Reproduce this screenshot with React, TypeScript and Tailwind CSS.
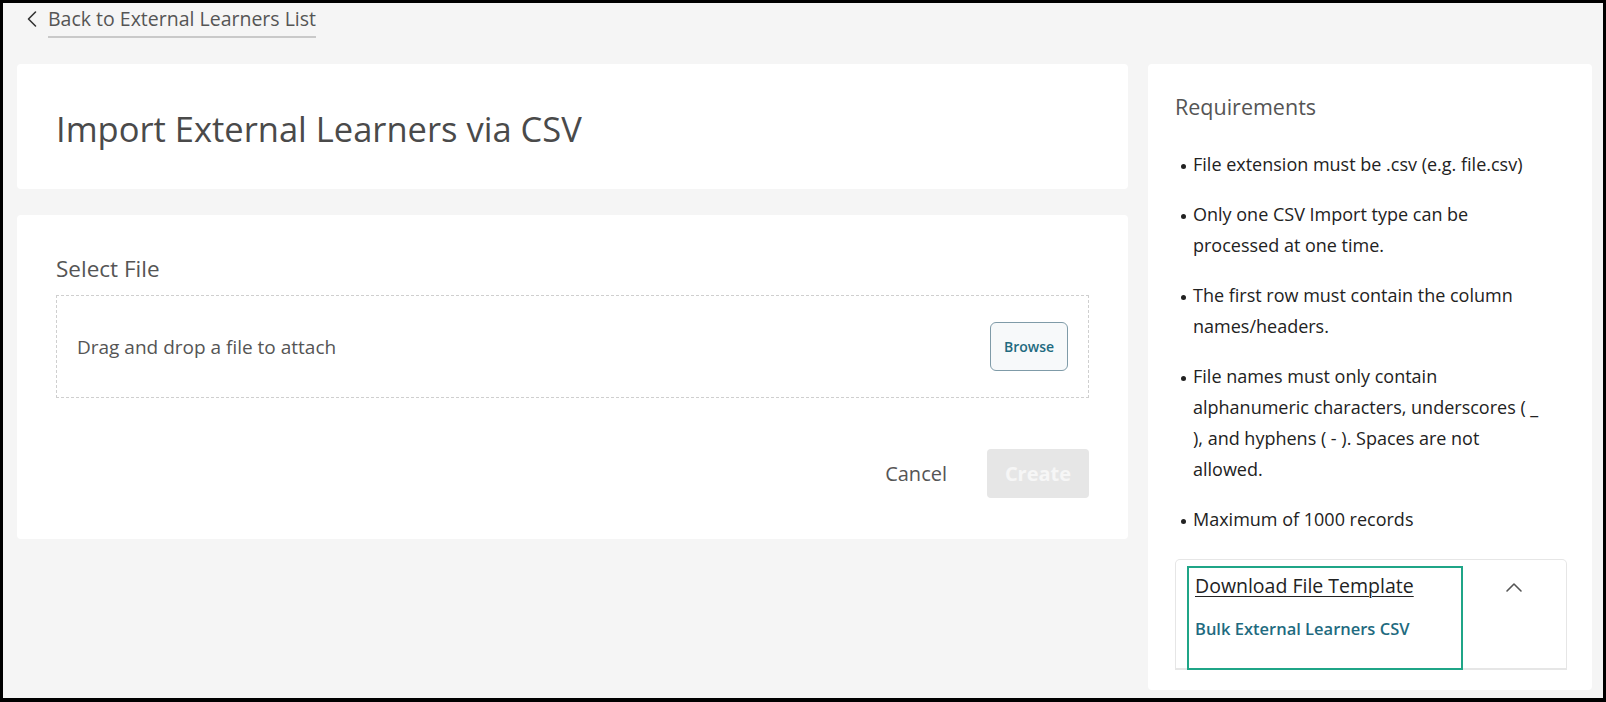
import React from "react";

function ChevronLeft() {
  return (
    <svg width="12" height="18" viewBox="0 0 12 18" fill="none" className="shrink-0">
      <path d="M9.5 2 L2.5 9 L9.5 16" stroke="#333" strokeWidth="1.6" strokeLinecap="round" strokeLinejoin="round" />
    </svg>
  );
}

function ChevronUp() {
  return (
    <svg width="18" height="11" viewBox="0 0 18 11" fill="none">
      <path d="M2 9 L9 2 L16 9" stroke="#555" strokeWidth="1.6" strokeLinecap="round" strokeLinejoin="round" />
    </svg>
  );
}

const bullets: string[][] = [
  ["File extension must be .csv (e.g. file.csv)"],
  ["Only one CSV Import type can be", "processed at one time."],
  ["The first row must contain the column", "names/headers."],
  [
    "File names must only contain",
    "alphanumeric characters, underscores ( _",
    "), and hyphens ( - ). Spaces are not",
    "allowed.",
  ],
  ["Maximum of 1000 records"],
];

export default function App() {
  return (
    <div className="h-[702px] w-full overflow-hidden border-x-[3px] border-t-[3px] border-b-4 border-black bg-[#f5f5f5] [font-family:'Open_Sans',Lato,sans-serif]">
      <div className="pl-[14px] pr-[11px]">
        {/* Back link */}
        <div className="flex h-[61px] items-start pt-[4px] pl-[9px]">
          <a className="flex items-start gap-[10px] text-[19.5px] leading-[24px] text-[#555]">
            <span className="mt-[3px]">
              <ChevronLeft />
            </span>
            <span className="border-b-2 border-[#c9c9c9] pb-[5px]">Back to External Learners List</span>
          </a>
        </div>

        <div className="flex gap-[20px]">
          {/* Left column */}
          <div className="flex w-[1111px] shrink-0 flex-col gap-[26px]">
            <div className="flex h-[125px] items-center rounded bg-white px-[39px] pt-[4px]">
              <h1 className="text-[34.5px] font-medium leading-[40px] text-[#4a4a4a]">
                Import External Learners via CSV
              </h1>
            </div>

            <div className="flex h-[324px] flex-col rounded bg-white px-[39px] pt-[41px]">
              <div className="text-[22.5px] font-medium leading-[26px] text-[#555]">Select File</div>
              <div className="mt-[13px] flex h-[103px] items-center justify-between border border-dashed border-[#cfcfcf] pl-[20px] pr-[20px]">
                <span className="text-[19px] leading-[24px] text-[#555]">Drag and drop a file to attach</span>
                <button className="flex h-[49px] w-[78px] items-center justify-center rounded-[6px] border border-[#7f9ba8] bg-[#f7f9fa] text-[14px] font-semibold text-[#1f6b80]">
                  Browse
                </button>
              </div>
              <div className="mt-[51px] flex items-center justify-end gap-[40px]">
                <span className="text-[20px] leading-[26px] text-[#555]">Cancel</span>
                <button className="flex h-[49px] w-[102px] items-center justify-center rounded-[4px] bg-[#e6e6e6] text-[20px] font-bold text-[#f6f6f6]">
                  Create
                </button>
              </div>
            </div>
          </div>

          {/* Right column */}
          <div className="flex h-[626px] flex-1 flex-col rounded bg-white pl-[27px] pr-[25px] pt-[29px]">
            <div className="text-[21.5px] font-medium leading-[28px] text-[#555]">Requirements</div>
            <ul className="mt-[28px] flex flex-col gap-[19px]">
              {bullets.map((lines, i) => (
                <li key={i} className="flex text-[18px] leading-[31px] text-[#222]">
                  <span className="flex h-[31px] w-[18px] shrink-0 items-center pl-[6px] pt-[3px]">
                    <span className="block h-[5px] w-[5px] rounded-full bg-[#222]" />
                  </span>
                  <span>
                    {lines.map((l, j) => (
                      <React.Fragment key={j}>
                        {l}
                        {j < lines.length - 1 && <br />}
                      </React.Fragment>
                    ))}
                  </span>
                </li>
              ))}
            </ul>

            <div className="mt-[24px] flex h-[111px] justify-between rounded-t-[5px] border border-b-2 border-[#e6e6e6] pl-[11px] pr-[43px] pt-[6px]">
              <div className="flex h-[104px] w-[276px] flex-col border-2 border-[#1fa587] pl-[6px] pt-[4px]">
                <span className="text-[19.5px] leading-[28px] text-[#222] underline decoration-1 underline-offset-[3px]">
                  Download File Template
                </span>
                <span className="mt-[17px] text-[16.5px] font-semibold leading-[24px] text-[#1f6b80]">
                  Bulk External Learners CSV
                </span>
              </div>
              <div className="pt-[16px]">
                <ChevronUp />
              </div>
            </div>
          </div>
        </div>
      </div>
    </div>
  );
}
